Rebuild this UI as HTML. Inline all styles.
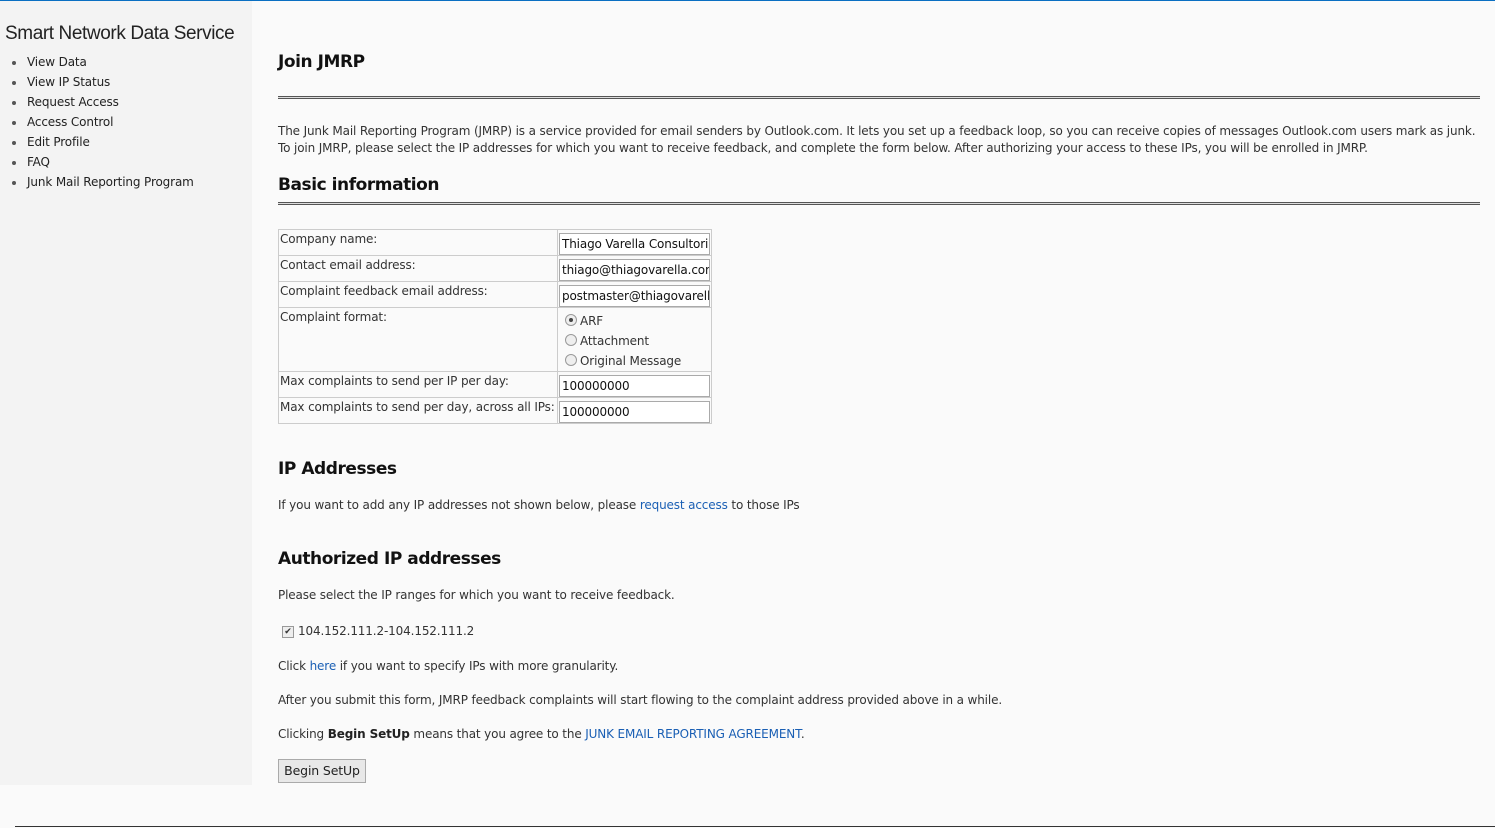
<!DOCTYPE html>
<html><head><style>
body{margin:0;width:1495px;height:828px;background:#fafafa;font-family:"DejaVu Sans",Verdana,sans-serif;font-size:12px;color:#333;position:relative;overflow:hidden;letter-spacing:-0.14px}
.a{position:absolute;white-space:nowrap}
#top{position:absolute;left:0;top:0;width:1495px;height:1px;background:#0a6fc2}
#side{position:absolute;left:0;top:1px;width:252px;height:784px;background:#f3f3f3}
.title{font-family:"Liberation Sans",sans-serif;font-size:19px;color:#222;letter-spacing:-0.4px}
.nav{color:#222}
.nav span{position:absolute;left:-15px;top:6px;width:4px;height:4px;border-radius:50%;background:#555}
h2{position:absolute;margin:0;font-size:17px;font-weight:bold;color:#111;white-space:nowrap;letter-spacing:-0.45px}
.hr{position:absolute;left:278px;width:1202px;height:1px;border-top:1px solid #555;border-bottom:1px solid #555;background:#ddd}
a{color:#1a5fb4;text-decoration:none}
table{position:absolute;left:278px;top:229px;border-collapse:collapse;border:1px solid #ccc}
td{border:1px solid #ccc;padding:2px 1px 0;vertical-align:top;height:23px;color:#333;white-space:nowrap}
.in{width:147px;height:20px;border:1px solid #aaa;background:#fff;font-size:12px;line-height:20px;overflow:hidden;white-space:nowrap;padding-left:2px;color:#111;margin-top:1px}
.rad{display:inline-block;width:10px;height:10px;border:1px solid #999;border-radius:50%;background:#eee;vertical-align:-1px;margin:0 3px 0 6px;position:relative}
.btn{position:absolute;left:278px;top:759px;width:86px;height:22px;border:1px solid #aaa;background:#e8e8e8;font-size:12.5px;line-height:22px;text-align:center;color:#222}
</style></head><body>
<div id="top"></div>
<div id="side"></div>
<div class="a title" style="left:5px;top:23px">Smart Network Data Service</div>
<div class="a nav" style="left:27px;top:55px"><span></span>View Data</div>
<div class="a nav" style="left:27px;top:75px"><span></span>View IP Status</div>
<div class="a nav" style="left:27px;top:95px"><span></span>Request Access</div>
<div class="a nav" style="left:27px;top:115px"><span></span>Access Control</div>
<div class="a nav" style="left:27px;top:135px"><span></span>Edit Profile</div>
<div class="a nav" style="left:27px;top:155px"><span></span>FAQ</div>
<div class="a nav" style="left:27px;top:175px"><span></span>Junk Mail Reporting Program</div>

<h2 style="left:278px;top:52px">Join JMRP</h2>
<div class="hr" style="top:96px"></div>
<div class="a" style="left:278px;top:124px">The Junk Mail Reporting Program (JMRP) is a service provided for email senders by Outlook.com. It lets you set up a feedback loop, so you can receive copies of messages Outlook.com users mark as junk.</div>
<div class="a" style="left:278px;top:141px">To join JMRP, please select the IP addresses for which you want to receive feedback, and complete the form below. After authorizing your access to these IPs, you will be enrolled in JMRP.</div>
<h2 style="left:278px;top:175px">Basic information</h2>
<div class="hr" style="top:202px"></div>

<table>
<tr><td style="width:276px">Company name:</td><td><div class="in">Thiago Varella Consultoria</div></td></tr>
<tr><td>Contact email address:</td><td><div class="in">thiago@thiagovarella.com</div></td></tr>
<tr><td>Complaint feedback email address:</td><td><div class="in">postmaster@thiagovarella.com</div></td></tr>
<tr><td style="height:61px">Complaint format:</td><td style="line-height:20px;padding-top:3px"><div><span class="rad"><span style="position:absolute;left:3px;top:3px;width:4px;height:4px;border-radius:50%;background:#444"></span></span>ARF</div><div><span class="rad"></span>Attachment</div><div><span class="rad"></span>Original Message</div></td></tr>
<tr><td>Max complaints to send per IP per day:</td><td><div class="in">100000000</div></td></tr>
<tr><td>Max complaints to send per day, across all IPs:</td><td><div class="in">100000000</div></td></tr>
</table>

<h2 style="left:278px;top:459px">IP Addresses</h2>
<div class="a" style="left:278px;top:498px">If you want to add any IP addresses not shown below, please <a>request access</a> to those IPs</div>
<h2 style="left:278px;top:549px">Authorized IP addresses</h2>
<div class="a" style="left:278px;top:588px">Please select the IP ranges for which you want to receive feedback.</div>
<div class="a" style="left:282px;top:624px"><span style="display:inline-block;width:10px;height:10px;border:1px solid #999;background:#eee;font-size:9px;line-height:10px;text-align:center;vertical-align:1px;margin-right:4px">✔</span>104.152.111.2-104.152.111.2</div>
<div class="a" style="left:278px;top:659px">Click <a>here</a> if you want to specify IPs with more granularity.</div>
<div class="a" style="left:278px;top:693px">After you submit this form, JMRP feedback complaints will start flowing to the complaint address provided above in a while.</div>
<div class="a" style="left:278px;top:727px">Clicking <b style="color:#222">Begin SetUp</b> means that you agree to the <a>JUNK EMAIL REPORTING AGREEMENT</a>.</div>
<div class="btn">Begin SetUp</div>
<div style="position:absolute;left:15px;top:826px;width:1480px;height:1px;background:#333"></div>
</body></html>
